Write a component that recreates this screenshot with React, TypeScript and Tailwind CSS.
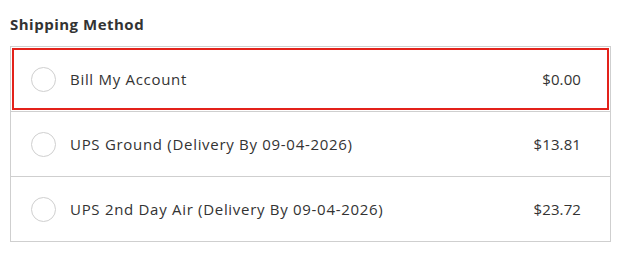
import React from "react";

type Method = { id: string; label: string; price: string };

const methods: Method[] = [
  { id: "bill", label: "Bill My Account", price: "$0.00" },
  { id: "ground", label: "UPS Ground (Delivery By 09-04-2026)", price: "$13.81" },
  { id: "air", label: "UPS 2nd Day Air (Delivery By 09-04-2026)", price: "$23.72" },
];

export default function App() {
  const selected = "bill";
  return (
    <div className="w-[620px] h-[253px] bg-white px-[10px] pt-[14px] text-[#333]" style={{ fontFamily: '"Open Sans", "Liberation Sans", sans-serif' }}>
      <h2 className="text-[15px] font-bold leading-[20px] tracking-[0.5px] text-[#333]">Shipping Method</h2>
      <div className="mt-[12px] w-[601px] border border-[#cfcfcf]">
        {methods.map((m, i) => (
          <div key={m.id} className={i < methods.length - 1 ? "border-b border-[#cfcfcf] p-px" : "p-px"}>
            <label
              className={
                "flex items-center h-[62px] pl-[17px] pr-[26px] cursor-pointer border-2 " +
                (m.id === selected ? "border-[#e3221b]" : "border-transparent")
              }
            >
              <span className="w-[25px] h-[25px] rounded-full border border-[#cfcfcf] bg-white shrink-0" />
              <span className="ml-[14px] text-[15px] tracking-[0.7px] text-[#333]">{m.label}</span>
              <span className="ml-auto text-[15px] tracking-[0.1px] text-[#333]">{m.price}</span>
            </label>
          </div>
        ))}
      </div>
    </div>
  );
}
